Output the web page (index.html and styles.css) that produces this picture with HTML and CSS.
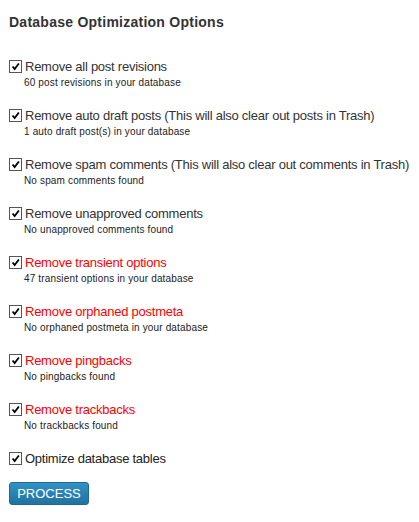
FILE: index.html
```html
<!DOCTYPE html>
<html>
<head>
<meta charset="utf-8">
<link rel="stylesheet" href="styles.css">
</head>
<body>
<div class="wrap">
  <h3 class="title">Database Optimization Options</h3>
  <ul class="opts">
    <li class="opt">
      <label class="line"><span class="cb"><svg viewBox="0 0 13 13" width="13" height="13"><path d="M3 6.5 L5.5 9.5 L10.5 3" fill="none" stroke="#000" stroke-width="2.2"/></svg></span>Remove all post revisions</label>
      <div class="desc">60 post revisions in your database</div>
    </li>
    <li class="opt">
      <label class="line"><span class="cb"><svg viewBox="0 0 13 13" width="13" height="13"><path d="M3 6.5 L5.5 9.5 L10.5 3" fill="none" stroke="#000" stroke-width="2.2"/></svg></span>Remove auto draft posts (This will also clear out posts in Trash)</label>
      <div class="desc">1 auto draft post(s) in your database</div>
    </li>
    <li class="opt">
      <label class="line"><span class="cb"><svg viewBox="0 0 13 13" width="13" height="13"><path d="M3 6.5 L5.5 9.5 L10.5 3" fill="none" stroke="#000" stroke-width="2.2"/></svg></span>Remove spam comments (This will also clear out comments in Trash)</label>
      <div class="desc">No spam comments found</div>
    </li>
    <li class="opt">
      <label class="line"><span class="cb"><svg viewBox="0 0 13 13" width="13" height="13"><path d="M3 6.5 L5.5 9.5 L10.5 3" fill="none" stroke="#000" stroke-width="2.2"/></svg></span>Remove unapproved comments</label>
      <div class="desc">No unapproved comments found</div>
    </li>
    <li class="opt">
      <label class="line warn"><span class="cb"><svg viewBox="0 0 13 13" width="13" height="13"><path d="M3 6.5 L5.5 9.5 L10.5 3" fill="none" stroke="#000" stroke-width="2.2"/></svg></span>Remove transient options</label>
      <div class="desc">47 transient options in your database</div>
    </li>
    <li class="opt">
      <label class="line warn"><span class="cb"><svg viewBox="0 0 13 13" width="13" height="13"><path d="M3 6.5 L5.5 9.5 L10.5 3" fill="none" stroke="#000" stroke-width="2.2"/></svg></span>Remove orphaned postmeta</label>
      <div class="desc">No orphaned postmeta in your database</div>
    </li>
    <li class="opt">
      <label class="line warn"><span class="cb"><svg viewBox="0 0 13 13" width="13" height="13"><path d="M3 6.5 L5.5 9.5 L10.5 3" fill="none" stroke="#000" stroke-width="2.2"/></svg></span>Remove pingbacks</label>
      <div class="desc">No pingbacks found</div>
    </li>
    <li class="opt">
      <label class="line warn"><span class="cb"><svg viewBox="0 0 13 13" width="13" height="13"><path d="M3 6.5 L5.5 9.5 L10.5 3" fill="none" stroke="#000" stroke-width="2.2"/></svg></span>Remove trackbacks</label>
      <div class="desc">No trackbacks found</div>
    </li>
    <li class="opt last">
      <label class="line strong"><span class="cb"><svg viewBox="0 0 13 13" width="13" height="13"><path d="M3 6.5 L5.5 9.5 L10.5 3" fill="none" stroke="#000" stroke-width="2.2"/></svg></span>Optimize database tables</label>
    </li>
  </ul>
  <button class="btn" type="button">PROCESS</button>
</div>
</body>
</html>
```

FILE: styles.css
```css
html, body {
  margin: 0;
  padding: 0;
  background: #fff;
}
body {
  font-family: "Liberation Sans", Arial, sans-serif;
  color: #333;
}
.wrap {
  padding: 14px 9px 0 9px;
}
.title {
  margin: 0;
  font-size: 14px;
  line-height: 17px;
  font-weight: bold;
  letter-spacing: 0.25px;
  color: #333;
}
.opts {
  list-style: none;
  margin: 28px 0 0 0;
  padding: 0;
  display: flex;
  flex-direction: column;
  gap: 16px;
}
.opt {
  display: flex;
  flex-direction: column;
}
.line {
  display: flex;
  align-items: center;
  font-size: 13px;
  line-height: 15px;
  letter-spacing: -0.25px;
  color: #333;
  white-space: nowrap;
}
.line.warn {
  color: #f00;
}
.line.strong {
  color: #222;
}
.cb {
  width: 11px;
  height: 11px;
  border: 1px solid #555;
  background: #fff;
  margin-right: 3px;
  display: flex;
  align-items: center;
  justify-content: center;
  overflow: hidden;
  flex: none;
}
.cb svg {
  display: block;
}
.desc {
  font-size: 10px;
  line-height: 18px;
  padding-left: 15px;
  letter-spacing: 0.15px;
  color: #222;
}
.btn {
  margin-top: 16px;
  width: 80px;
  height: 23px;
  padding: 0;
  border: 1px solid #1e6a93;
  border-radius: 3px;
  background: linear-gradient(#3391c5, #21739f);
  color: #fff;
  font-family: "Liberation Sans", Arial, sans-serif;
  font-size: 13px;
  line-height: 21px;
}
```
